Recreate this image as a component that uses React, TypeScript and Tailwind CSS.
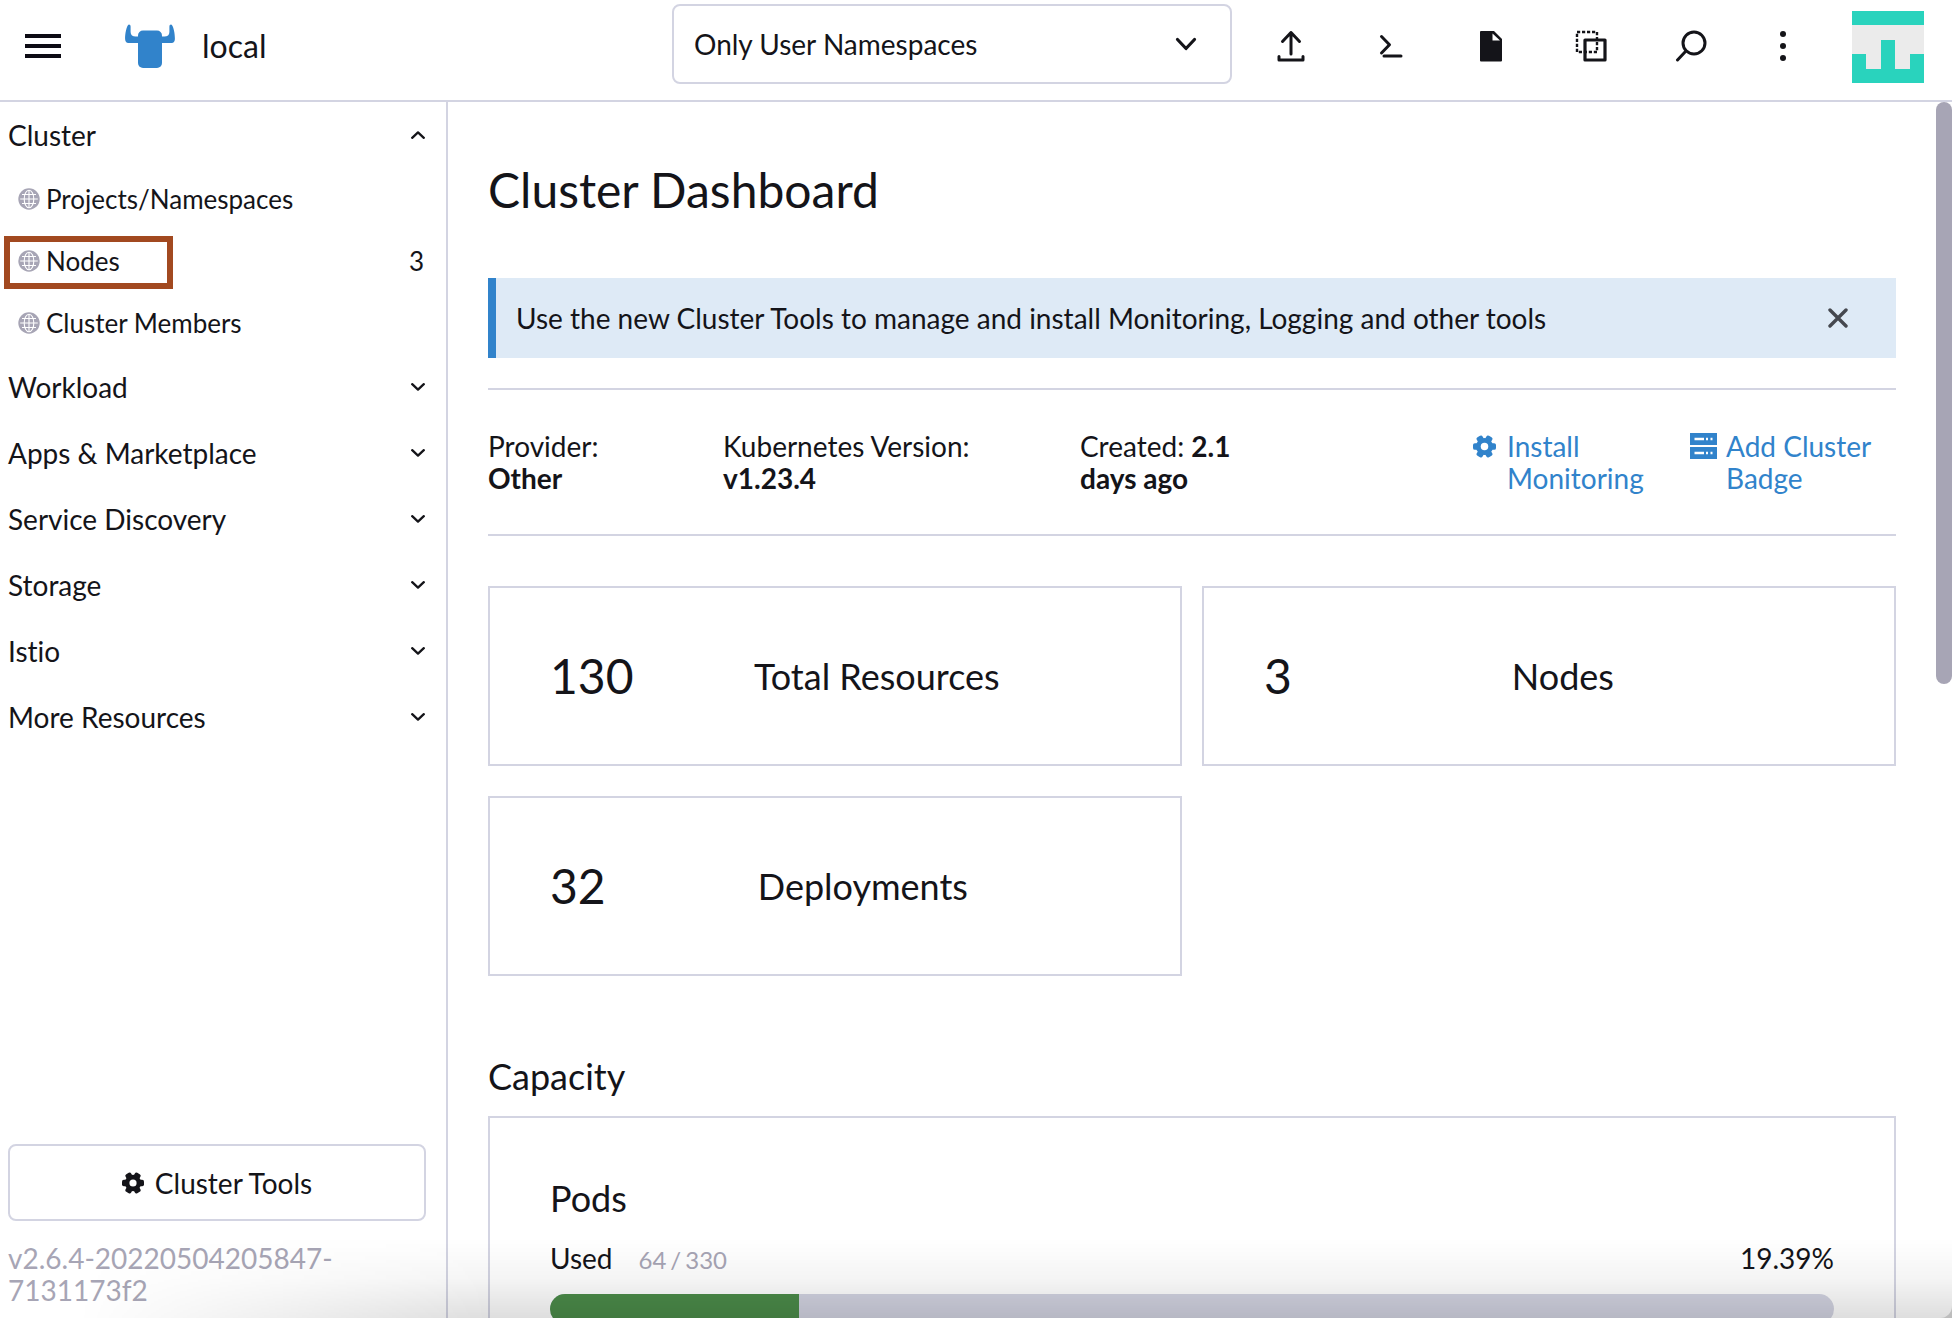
import React from "react";

function Chevron({ up = false }: { up?: boolean }) {
  return (
    <svg aria-hidden="true" className={up ? "h-2 w-[14px] rotate-180" : "h-2 w-[14px]"} viewBox="0 0 14 8" fill="none" stroke="currentColor" strokeWidth="2.300" strokeLinecap="round" strokeLinejoin="round">
      <path d="M1.2 1.2 7 6.6l5.8-5.400" />
    </svg>
  );
}

function Gear({ className }: { className: string }) {
  return (
    <svg aria-hidden="true" className={className} viewBox="0 0 22 22" fill="currentColor">
      <circle cx="11" cy="11" r="8.200" />
      <rect x="0" y="7.800" width="22" height="6.400" rx="1.800" />
      <rect x="0" y="7.800" width="22" height="6.400" rx="1.800" transform="rotate(60 11 11)" />
      <rect x="0" y="7.800" width="22" height="6.400" rx="1.800" transform="rotate(120 11 11)" />
      <circle cx="11" cy="11" r="3.600" fill="#fff" />
    </svg>
  );
}

function Globe() {
  return (
    <svg aria-hidden="true" className="h-[22px] w-[22px] shrink-0 text-[#a7a5b5]" viewBox="0 0 22 22">
      <circle cx="11" cy="11" r="10.700" fill="currentColor" />
      <g fill="none" stroke="#fff" strokeWidth="1.100">
        <ellipse cx="11" cy="11" rx="4.800" ry="8.800" />
        <path d="M11 2.200v17.600M2.200 11h17.600M4 6.500h14M4 15.500h14" />
      </g>
    </svg>
  );
}

function Server() {
  return (
    <svg aria-hidden="true" className="mt-[3px] h-[26px] w-[27px] shrink-0" viewBox="0 0 27 26" fill="currentColor" fillRule="evenodd">
      <path d="M0 0h27v12H0zM4.500 4.700v2.600H14V4.700zM16 4.700v2.600h2V4.700zM20.500 4.700v2.600h2V4.700z" />
      <path d="M0 14h27v12H0zM4.500 18.700v2.600H14v-2.600zM16 18.700v2.600h2v-2.600zM20.500 18.700v2.600h2v-2.600z" />
    </svg>
  );
}

function Bull() {
  return (
    <svg aria-hidden="true" className="h-11 w-[50px] text-[#3183cb]" viewBox="0 0 50 44" fill="currentColor">
      <path d="M3.500.7C4.500.3 5.500 1 5.600 2.500V8c0 3 2 4.500 5 4.500h4V19H3.500C1 19 .2 17 .1 15 0 10 1.500 1.800 3.500.700zM46.500.7C45.500.3 44.500 1 44.400 2.500V8c0 3-2 4.500-5 4.500h-4V19h11.100c2.500 0 3.300-2 3.400-4 .1-5-1.400-13.200-3.400-14.300z" />
      <rect x="13" y="6.500" width="24" height="37.500" rx="5" />
    </svg>
  );
}

function Avatar() {
  return (
    <svg role="img" aria-label="User" className="h-[72px] w-[72px]" viewBox="0 0 5 5" shapeRendering="crispEdges">
      <path fill="#ebebeb" d="M0 0h5v5H0z" />
      <path fill="#29d3bd" d="M0 0h5v1H0zM2 2h1v2h1V3h1v2H0V3h1v1h1z" />
    </svg>
  );
}

const actions = [
  {
    label: "Import YAML",
    icon: (
      <g fill="none" stroke="currentColor" strokeWidth="3" strokeLinecap="round" strokeLinejoin="round">
        <path d="M16 24V2.500M7.500 11.500 16 2.500l8.500 9M4 26.500v3.500h24v-3.500" />
      </g>
    ),
  },
  {
    label: "Kubectl Shell",
    icon: (
      <g fill="none" stroke="currentColor" strokeWidth="3" strokeLinecap="round" strokeLinejoin="round">
        <path d="M6.500 6.500 14.500 14.700 6.500 23M9 26h17" />
      </g>
    ),
  },
  {
    label: "Download KubeConfig",
    icon: <path fill="currentColor" fillRule="evenodd" d="M6 1h13l8 8v21.500q0 1-1 1H6q-1 0-1-1V2q0-1 1-1zM17.500 3.500V10.500h7.500z" />,
  },
  {
    label: "Copy KubeConfig",
    icon: (
      <g fill="none" stroke="currentColor" strokeLinejoin="round">
        <rect x="2" y="2" width="20" height="20" strokeWidth="2.400" strokeDasharray="3.200 1.800" />
        <rect x="10" y="10" width="20" height="20" strokeWidth="3.200" />
      </g>
    ),
  },
  {
    label: "Resource Search",
    icon: (
      <g fill="none" stroke="currentColor" strokeWidth="3" strokeLinecap="round">
        <circle cx="19" cy="13" r="11" />
        <path d="M10.500 21.500 2.500 30" />
      </g>
    ),
  },
];

const sections = ["Workload", "Apps & Marketplace", "Service Discovery", "Storage", "Istio", "More Resources"];

const clusterLinks = [
  { label: "Projects/Namespaces", count: "", marked: false },
  { label: "Nodes", count: "3", marked: true },
  { label: "Cluster Members", count: "", marked: false },
];

const cards = [
  { count: "130", label: "Total Resources" },
  { count: "3", label: "Nodes" },
  { count: "32", label: "Deployments" },
];

export default function App() {
  const used = 64;
  const total = 330;
  return (
    <div className="bg-[#bdbdbd]">
      <div className="relative flex h-screen flex-col overflow-hidden rounded-br-xl bg-white font-['Lato',sans-serif] text-[28px] leading-8 text-[#141419] [font-variant-ligatures:none]">
        <header className="flex h-[102px] shrink-0 items-start border-b-2 border-[#d3d4e2]">
          <button type="button" aria-label="Menu" className="mt-[34px] ml-[25px] flex w-9 flex-col gap-[6px]">
            <span className="h-1 w-full bg-[#0d0b14]" />
            <span className="h-1 w-full bg-[#0d0b14]" />
            <span className="h-1 w-full bg-[#0d0b14]" />
          </button>
          <div className="ml-16 flex h-[92px] items-center gap-[27px]">
            <Bull />
            <span className="text-[32px]">local</span>
          </div>
          <div className="relative mt-1 ml-auto h-20 w-[560px] shrink-0">
            <select aria-label="Namespaces" className="h-full w-full appearance-none rounded-lg border-2 border-[#d3d4e2] bg-white px-5">
              <option>Only User Namespaces</option>
            </select>
            <svg aria-hidden="true" className="pointer-events-none absolute top-7 right-[34px] h-6 w-6" viewBox="0 0 24 24" fill="none" stroke="currentColor" strokeWidth="3.200" strokeLinecap="round" strokeLinejoin="round">
              <path d="M3.500 7.500 12 16.500l8.500-9" />
            </svg>
          </div>
          <div className="ml-[43px] flex h-[92px] items-center gap-[68px]">
            {actions.map((a) => (
              <button key={a.label} type="button" aria-label={a.label}>
                <svg aria-hidden="true" className="h-8 w-8" viewBox="0 0 32 32">
                  {a.icon}
                </svg>
              </button>
            ))}
            <button type="button" aria-label="More actions" className="flex w-4 flex-col items-center gap-[6px]">
              <span className="h-[6px] w-[6px] rounded-full bg-current" />
              <span className="h-[6px] w-[6px] rounded-full bg-current" />
              <span className="h-[6px] w-[6px] rounded-full bg-current" />
            </button>
          </div>
          <button type="button" aria-label="Account" className="mt-[11px] mr-7 ml-[61px]">
            <Avatar />
          </button>
        </header>

        <div className="flex min-h-0 flex-1">
          <nav aria-label="Cluster navigation" className="flex w-[448px] shrink-0 flex-col border-r-2 border-[#d3d4e2]">
            <button type="button" aria-expanded="true" className="flex h-[66px] items-center justify-between pr-[21px] pl-2">
              Cluster
              <Chevron up />
            </button>
            {clusterLinks.map((l) => (
              <a key={l.label} href="#" className="relative flex h-[62px] items-center gap-[6px] pr-[22px] pl-[18px] text-[26px]">
                {l.marked && <span className="absolute top-[6px] left-1 h-[53px] w-[169px] border-6 border-[#a24920]" />}
                <Globe />
                <span>{l.label}</span>
                <span className="ml-auto">{l.count}</span>
              </a>
            ))}
            {sections.map((s) => (
              <button key={s} type="button" aria-expanded="false" className="flex h-[66px] items-center justify-between pr-[21px] pl-2">
                {s}
                <Chevron />
              </button>
            ))}
            <div className="mt-auto pr-5 pb-3 pl-2">
              <button type="button" className="flex h-[77px] w-full items-center justify-center gap-[11px] rounded-lg border-2 border-[#d3d4e2]">
                <Gear className="h-[22px] w-[22px]" />
                Cluster Tools
              </button>
              <p className="mt-[21px] w-[340px] text-[#a7a5b5]">v2.6.4-20220504205847-7131173f2</p>
            </div>
          </nav>

          <main className="min-w-0 flex-1 overflow-hidden px-10">
            <h1 className="mt-[62px] text-[48px] leading-[52px]">Cluster Dashboard</h1>
            <div className="mt-[62px] flex h-20 items-center justify-between border-l-8 border-[#3183cb] bg-[#deeaf6] pr-12 pl-5">
              <p>Use the new Cluster Tools to manage and install Monitoring, Logging and other tools</p>
              <button type="button" aria-label="Close">
                <svg aria-hidden="true" className="h-5 w-5" viewBox="0 0 20 20" stroke="#45484f" strokeWidth="3.400" strokeLinecap="round">
                  <path d="M2 2l16 16M18 2 2 18" />
                </svg>
              </button>
            </div>
            <section aria-label="Cluster details" className="mt-[30px] flex h-[148px] items-start border-y-2 border-[#d3d4e2] pt-10">
              <p className="w-[235px]">Provider:<br /><b>Other</b></p>
              <p className="w-[357px]">Kubernetes Version:<br /><b>v1.23.4</b></p>
              <p className="w-[190px]">Created: <b>2.1</b><br /><b>days ago</b></p>
              <a href="#" className="ml-auto flex w-[173px] gap-[11px] text-[#3183cb]">
                <Gear className="mt-[5px] h-[23px] w-[23px] shrink-0" />
                <span>Install Monitoring</span>
              </a>
              <a href="#" className="ml-11 flex w-[206px] gap-[9px] text-[#3183cb]">
                <Server />
                <span className="w-[150px]">Add Cluster Badge</span>
              </a>
            </section>
            <section aria-label="Resources" className="mt-[50px] grid grid-cols-2 gap-x-5 gap-y-[30px]">
              {cards.map((c) => (
                <a key={c.label} href="#" className="flex h-[180px] items-center border-2 border-[#d3d4e2] px-[60px]">
                  <span className="text-[48px] leading-[52px]">{c.count}</span>
                  <span className="flex-1 text-center text-[36px] leading-10">{c.label}</span>
                </a>
              ))}
            </section>
            <h2 className="mt-20 text-[36px] leading-10">Capacity</h2>
            <section aria-label="Pods capacity" className="mt-5 border-2 border-[#d3d4e2] p-[60px]">
              <h3 className="text-[36px] leading-10">Pods</h3>
              <div className="mt-6 flex items-baseline">
                <span>Used</span>
                <span className="ml-[26px] flex gap-1 text-2xl leading-8 text-[#a7a5b5]">
                  <span>{used}</span>
                  <span>/</span>
                  <span>{total}</span>
                </span>
                <span className="ml-auto">19.39%</span>
              </div>
              <div className="mt-[18px] h-[30px] overflow-hidden rounded-full bg-[#d3d4e2]">
                <div className="h-full bg-[#4c8c4a]" style={{ width: (used / total) * 100 + "%" }} />
              </div>
            </section>
          </main>
          <div className="w-4 shrink-0">
            <div className="h-[582px] w-full rounded-full bg-[#a7a5b5]" />
          </div>
        </div>
        <div className="pointer-events-none absolute inset-x-0 bottom-0 h-20 bg-gradient-to-b from-transparent via-black/4 to-black/13 mask-l-from-75% mask-l-to-96%" />
      </div>
    </div>
  );
}
